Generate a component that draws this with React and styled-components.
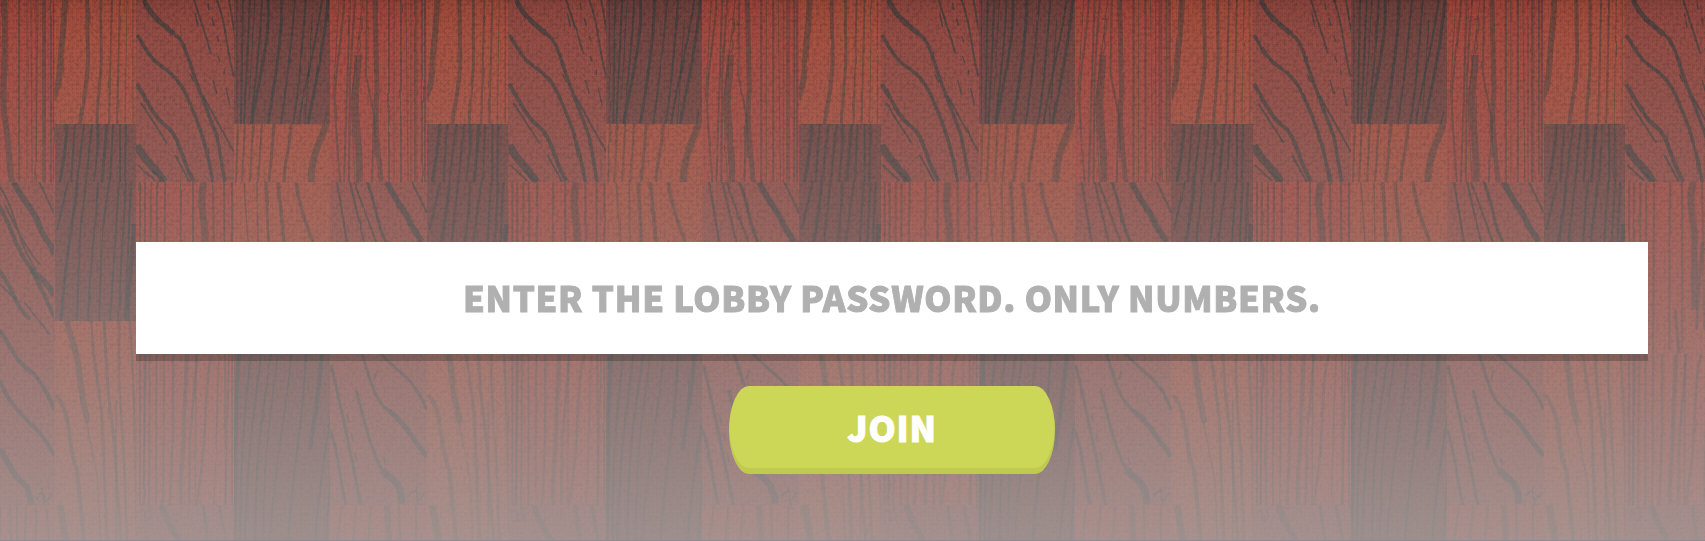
import React from "react";
import styled, { createGlobalStyle } from "styled-components";

const Global = createGlobalStyle`
  * { box-sizing: border-box; }
  html, body, #root { margin: 0; height: 100%; overflow: hidden; }
`;

const Page = styled.main`
  position: relative;
  height: 541px;
  padding: 242px 57px 0 136px;
  background: #9b554b;
  overflow: hidden;
  font-family: "Noto Sans CJK SC", "Noto Sans", sans-serif;
`;

const Backdrop = styled.svg`
  position: absolute;
  inset: 0;
  width: 100%;
  height: 100%;
`;

const Form = styled.form`
  position: relative;
  display: flex;
  flex-direction: column;
  align-items: center;
  gap: 32px;
`;

const PasswordInput = styled.input`
  width: 100%;
  height: 112px;
  padding: 0 0 2px;
  border: 0;
  border-radius: 0;
  outline: 0;
  background: #fff;
  box-shadow: 0 7px 0 rgba(0, 0, 0, 0.2);
  color: #555;
  font: 900 34.7px/1 "Noto Sans CJK SC", "Noto Sans", sans-serif;
  letter-spacing: 0.65px;
  -webkit-text-stroke: 0.9px currentColor;
  text-align: center;
  &::placeholder { color: #b0b0b0; opacity: 1; }
`;

const JoinButton = styled.button`
  width: 326px;
  height: 88px;
  padding: 0 0 6px;
  border: 0;
  border-radius: 20px / 44px;
  background: #cdd757;
  box-shadow: inset 0 -6px 0 rgba(0, 0, 0, 0.06);
  color: #fff;
  font: 900 34.7px/1 "Noto Sans CJK SC", "Noto Sans", sans-serif;
  letter-spacing: 0.8px;
  -webkit-text-stroke: 0.9px currentColor;
`;

const RED = "#a83c30";
const ORANGE = "#ab4330";
const BROWN = "#943e35";
const DARK = "#6f3732";

const planks = [
  [0, 0, 55, 182, RED], [0, 182, 55, 323, BROWN], [0, 505, 55, 36, RED],
  [54.5, 0, 82, 124, ORANGE], [54.5, 124, 82, 197, DARK], [54.5, 321, 82, 220, ORANGE],
  [136, 0, 98.5, 182, BROWN], [136, 182, 98.5, 323, RED], [136, 505, 98.5, 36, BROWN],
  [234, 0, 96.5, 124, DARK], [234, 124, 96.5, 197, ORANGE], [234, 321, 96.5, 220, DARK],
  [330, 0, 42.3, 182, RED], [330, 182, 42.3, 323, BROWN], [330, 505, 42.3, 36, RED],
];

const grain = {
  leftRed: [
    [6, "M4 0C8 55 0 90 5 120S8 160 12 182"],
    [2, "M19 0V182M43 0V182M45 0V182M51 0V182M54 0V182"],
    [1, "M27 0V182M31 0L32 182M36 0V182M38 0L36 182"],
  ],
  orangeTop: [
    [6, "M65 0C64 35 61 44 60 68S55 88 53 100"],
    [4, "M87 0L88 58C88 85 82 105 80 124"],
    [3, "M101 0V40C103 75 97 95 97 124"],
    [2, "M112 0L109 124M120 0L117 124"],
    [1, "M127 0L125 124M133 0V124"],
  ],
  brownTop: [
    [5, "M144 0C151 17 164 25 174 34"],
    [3.5, "M174 34C181 38 184 44 191 66S207 109 217 137L225 182"],
    [3.5, "M137 35C144 45 149 58 161 66C184 81 186 96 194 113C202 132 209 158 213 182"],
    [4, "M137 84C150 107 157 120 167 127C180 137 181 160 194 181"],
    [8, "M137 145C141 154 146 160 151 165S160 175 164 182"],
    [2, "M194 0L207 40L211 54M217 0C227 25 226 50 234 77M229 0L235 35M141 103L167 143M175 155L190 182M203 96L234 152"],
    [2, "M138 165L155 181M152 171L165 182"],
    [1.5, "M208 3l1 7m3 8l2 8m3 10l2 6m-1 14l2 6m4 8v5M213 80l4 14M226 88l4 18M190 74l4 8M195 13l3 14"],
  ],
  darkTop: [
    [3, "M268 0C271 40 257 85 252 124M282 0C283 28 274 90 268 124M328 0C325 45 314 88 308 124"],
    [2, "M243 0L241 124M250 0L244 124M262 0C260 50 255 80 251 124M295 0C290 60 286 90 281 124M306 0C302 40 300 90 293 124M322 0C316 45 303 90 299 124"],
    [1, "M237 0V124M255 0L249 100M312 20L305 124M327 110L324 124"],
  ],
  redTop: [
    [5, "M375 0L377 90C374 125 378 145 381 182"],
    [7, "M358 55C358 78 353 94 356 115C357 147 361 155 359 182"],
    [2, "M344 0C343 40 333 75 335 112L340 182M350 0L344 182M355 0L350 75L349 182M367 0L366 75L374 115L372 182"],
    [2, "M389 0V182M401 0V182M415 0V182M422 0V182M425 0V182"],
    [1, "M339 0L333 100M394 0V182M406 0L408 182M411 0V182M417 0V182M363 0L355 70L351 100L355 182"],
    [1.5, "M357 19h5v10l-3 8l2 9l-3 8M375 115V158"],
  ],
  darkMid: [
    [3, "M67 124C67 145 63 162 60 182M77 182C76 213 66 244 61 321M98 124V145M107 124L102 182"],
    [2, "M75 124L71 182M84 124L77 182M92 124L86 182M98 145L94 182M113 124L110 182M120 124V182M126 124L125 182"],
    [2, "M68 182L57 230M86 182L80 235L77 321M98 182C97 220 90 255 88 321M109 182L102 235L99 321M119 182L110 321M126 182L118 321M131 182L125 321"],
    [4, "M134 224C132 270 127 295 128 321"],
  ],
  orangeMid: [
    [7, "M326 124C322 140 312 150 311 182"],
    [3, "M274 124C273 142 271 160 269 182M291 124C291 145 284 161 284 182"],
    [2, "M238 124L236 182M245 124L242 182M253 124L250 182M262 124L258 182"],
    [3.5, "M266 182L269 242C271 290 264 310 265 345M278 182L284 242M296 182C299 205 305 223 313 242"],
    [1.5, "M244 182L248 242M257 182L258 242"],
  ],
  redMid: [
    [7, "M204 182C198 205 206 220 205 242V310"],
    [4, "M187 354L184 420C184 455 179 480 181 505"],
    [2.5, "M173 354V430L170 505M197 354L190 440L189 505M212 354C203 390 208 430 200 480L197 505"],
    [2, "M140 182V505M145 182L144 505M151 182L149 505M157 182L156 505M165 182L163 505M181 182L180 350M193 182V350M213 182L215 330M224 182L226 505M232 182V505"],
    [1.5, "M146 354L143 505M196 354L195 505M219 354L214 505M229 354L225 505"],
    [3, "M186 310L190 354M213 242L207 330"],
  ],
  brownMid: [
    [6, "M14 182C23 203 34 208 39 225S53 242 54 255M31 270C46 282 51 288 54 296"],
    [4, "M-2 205C10 220 14 247 28 264C36 275 44 296 55 318M-1 270C13 286 15 308 30 319M0 330C12 348 15 362 34 374C45 387 48 396 55 410M0 380C9 403 15 407 27 420C42 433 47 444 55 456"],
    [2, "M0 187C16 210 16 240 36 270M5 205C15 227 30 255 40 264M39 182L54 213M0 284L16 300M24 302L50 335"],
    [6, "M0 449C10 467 15 478 27 487L32 505"],
    [1.5, "M36 498q8 -10 8 0t8 -4M42 488l2 18"],
    [2, "M337 182L347 242M350 182L364 242"],
    [3, "M367 182C376 202 376 225 386 242"],
    [6, "M387 182C396 203 407 212 411 225L422 242"],
    [2, "M354 182L376 242M412 182L427 213"],
    [3, "M331 365C340 400 350 450 361 505M330 430C338 447 339 478 346 505M362 354C372 385 374 399 389 411"],
    [5, "M389 411C407 424 413 442 427 456"],
    [3, "M381 354C399 374 412 375 427 410M356 390C362 410 369 447 382 470"],
    [7, "M382 470C393 482 401 480 402 504"],
    [1.5, "M377 370L374 380M347 415l2 8m2 10l2 8m2 12l2 8M383 457L386 465"],
    [1.5, "M409 496q8 -10 8 0t8 -4M416 487l2 18"],
  ],
  orangeLow: [
    [6, "M67 321C71 340 77 350 79 370S83 405 88 423"],
    [4, "M56 395C73 415 67 450 77 470L84 541"],
    [3, "M91 321C91 347 98 380 102 415L107 541M104 321L108 390L114 440L121 541"],
    [2.5, "M119 321V382L124 460L127 541M130 321L134 400L137 541"],
    [1.5, "M86 420L98 480L100 541M116 400V541"],
    [7, "M60 505L66 541"],
  ],
  darkLow: [
    [4, "M239 354C234 415 237 455 234 541M322 354C318 402 314 420 310 450"],
    [2, "M251 354C248 390 241 420 240 541M261 354C255 410 248 440 245 541M271 354C265 405 256 430 255 541M306 354C302 440 294 450 288 541M332 410C325 450 319 490 315 541"],
    [1.5, "M278 354C271 410 264 445 263 541M291 354C288 410 275 450 270 541M333 440L326 541"],
  ],
  bottom: [
    [2, "M0 505V541M10 505L11 541M17 505V541M26 505L25 541M36 505V541M46 505L49 541"],
    [6, "M162 505C165 520 173 530 179 541M387 505L389 541"],
    [3, "M203 505L208 541M219 505L226 541"],
    [1.5, "M140 512q6 -5 5 4t8 0M149 506l2 12M232 505L238 520"],
    [2, "M342 505L337 541M356 505L353 541M371 505L368 541M399 505L400 541M416 505V541"],
  ],
};

const TILE = 372.3;
const softGrain = ["leftRed", "orangeTop", "redTop", "orangeMid", "redMid", "orangeLow", "bottom"];
const regions = [
  ["leftRed", 0, 0, 54, 182], ["orangeTop", 54.5, 0, 81.5, 124],
  ["brownTop", 136, 0, 98, 182], ["darkTop", 234, 0, 96, 124],
  ["redTop", 330, 0, 97, 182], ["darkMid", 54.5, 124, 81.5, 197],
  ["orangeMid", 234, 124, 96, 197], ["redMid", 136, 182, 98, 323],
  ["orangeLow", 54.5, 321, 81.5, 220], ["darkLow", 234, 321, 96, 220],
];

function Grain({ name, clip = name }) {
  return (
    <g
      clipPath={`url(#clip-${clip})`}
      fill="none"
      stroke="#26302f"
      strokeOpacity={softGrain.includes(name) ? 0.45 : 0.64}
    >
      {grain[name].map(([w, d], i) => <path key={i} d={d} strokeWidth={w} />)}
    </g>
  );
}

function WoodTile() {
  return (
    <g id="wood" shapeRendering="crispEdges">
      {planks.map(([x, y, w, h, fill], i) => (
        <rect key={i} x={x} y={y} width={w} height={h} fill={fill} />
      ))}
    </g>
  );
}

/* The last plank column crosses the tile seam, so its grain runs to x = 427. */
function Strokes() {
  return (
    <g id="strokes">
      {regions.filter(([n]) => n !== "leftRed").map(([name]) => <Grain key={name} name={name} />)}
      <Grain name="brownMid" clip="rightMid" />
      <Grain name="bottom" clip="low" />
    </g>
  );
}

function WoodBackdrop() {
  return (
    <Backdrop viewBox="0 0 1705 541" preserveAspectRatio="none" aria-hidden="true">
      <defs>
        {regions.map(([name, x, y, w, h]) => (
          <clipPath id={`clip-${name}`} key={name}><rect x={x} y={y} width={w} height={h} /></clipPath>
        ))}
        <clipPath id="clip-leftMid"><rect x="0" y="182" width="54" height="323" /></clipPath>
        <clipPath id="clip-rightMid"><rect x="330" y="182" width="97" height="323" /></clipPath>
        <clipPath id="clip-leftLow"><rect x="0" y="505" width="54" height="36" /></clipPath>
        <clipPath id="clip-low"><path d="M136 505H234V541H136zM330 505H427V541H330z" /></clipPath>
        <WoodTile />
        <Strokes />
        <linearGradient id="fade" x1="0" y1="0" x2="0" y2="1">
          <stop offset="0" stopColor="#a09a9a" stopOpacity="0.12" />
          <stop offset="0.5" stopColor="#a6a0a0" stopOpacity="0.46" />
          <stop offset="1" stopColor="#aaa4a3" stopOpacity="0.82" />
        </linearGradient>
        <linearGradient id="shade" x1="0" y1="0" x2="0" y2="1">
          <stop offset="0" stopColor="#000" stopOpacity="0.1" />
          <stop offset="0.3" stopColor="#000" stopOpacity="0.04" />
          <stop offset="1" stopColor="#000" stopOpacity="0" />
        </linearGradient>
        <pattern id="weave" width="4" height="4" patternUnits="userSpaceOnUse">
          <path d="M0 .5H3M.5 0V3" stroke="#000" strokeOpacity=".06" />
        </pattern>
        <filter id="rough" x="0" y="0" width="1705" height="541" filterUnits="userSpaceOnUse" colorInterpolationFilters="sRGB">
          <feTurbulence type="fractalNoise" baseFrequency="0.15 0.025" numOctaves="2" seed="5" />
          <feDisplacementMap in="SourceGraphic" scale="2" xChannelSelector="R" yChannelSelector="G" />
        </filter>
        <filter id="speckle" x="0" y="0" width="100%" height="100%" colorInterpolationFilters="sRGB">
          <feTurbulence type="fractalNoise" baseFrequency="0.3" numOctaves="2" seed="2" />
          <feColorMatrix values="0 0 0 0 0  0 0 0 0 0  0 0 0 0 0  0.5 0 0 0 -0.2" />
        </filter>
      </defs>
      {[0, 1, 2, 3, 4].map((i) => <use key={i} href="#wood" x={i * TILE} />)}
      <g filter="url(#rough)">
        {[0, 1, 2, 3, 4].map((i) => <use key={i} href="#strokes" x={i * TILE} />)}
        <Grain name="leftRed" />
        <Grain name="brownMid" clip="leftMid" />
        <Grain name="bottom" clip="leftLow" />
      </g>
      <rect width="1705" height="541" fill="url(#weave)" />
      <rect width="1705" height="541" filter="url(#speckle)" />
      <rect width="1705" height="541" fill="url(#fade)" />
      <rect width="1705" height="42" fill="url(#shade)" />
      <rect y="540" width="1705" height="1" fill="#8f8a90" />
    </Backdrop>
  );
}

export default function App() {
  return (
    <Page>
      <Global />
      <WoodBackdrop />
      <Form onSubmit={(e) => e.preventDefault()}>
        <PasswordInput
          inputMode="numeric"
          aria-label="Lobby password"
          placeholder="ENTER THE LOBBY PASSWORD. ONLY NUMBERS."
        />
        <JoinButton type="submit">JOIN</JoinButton>
      </Form>
    </Page>
  );
}
